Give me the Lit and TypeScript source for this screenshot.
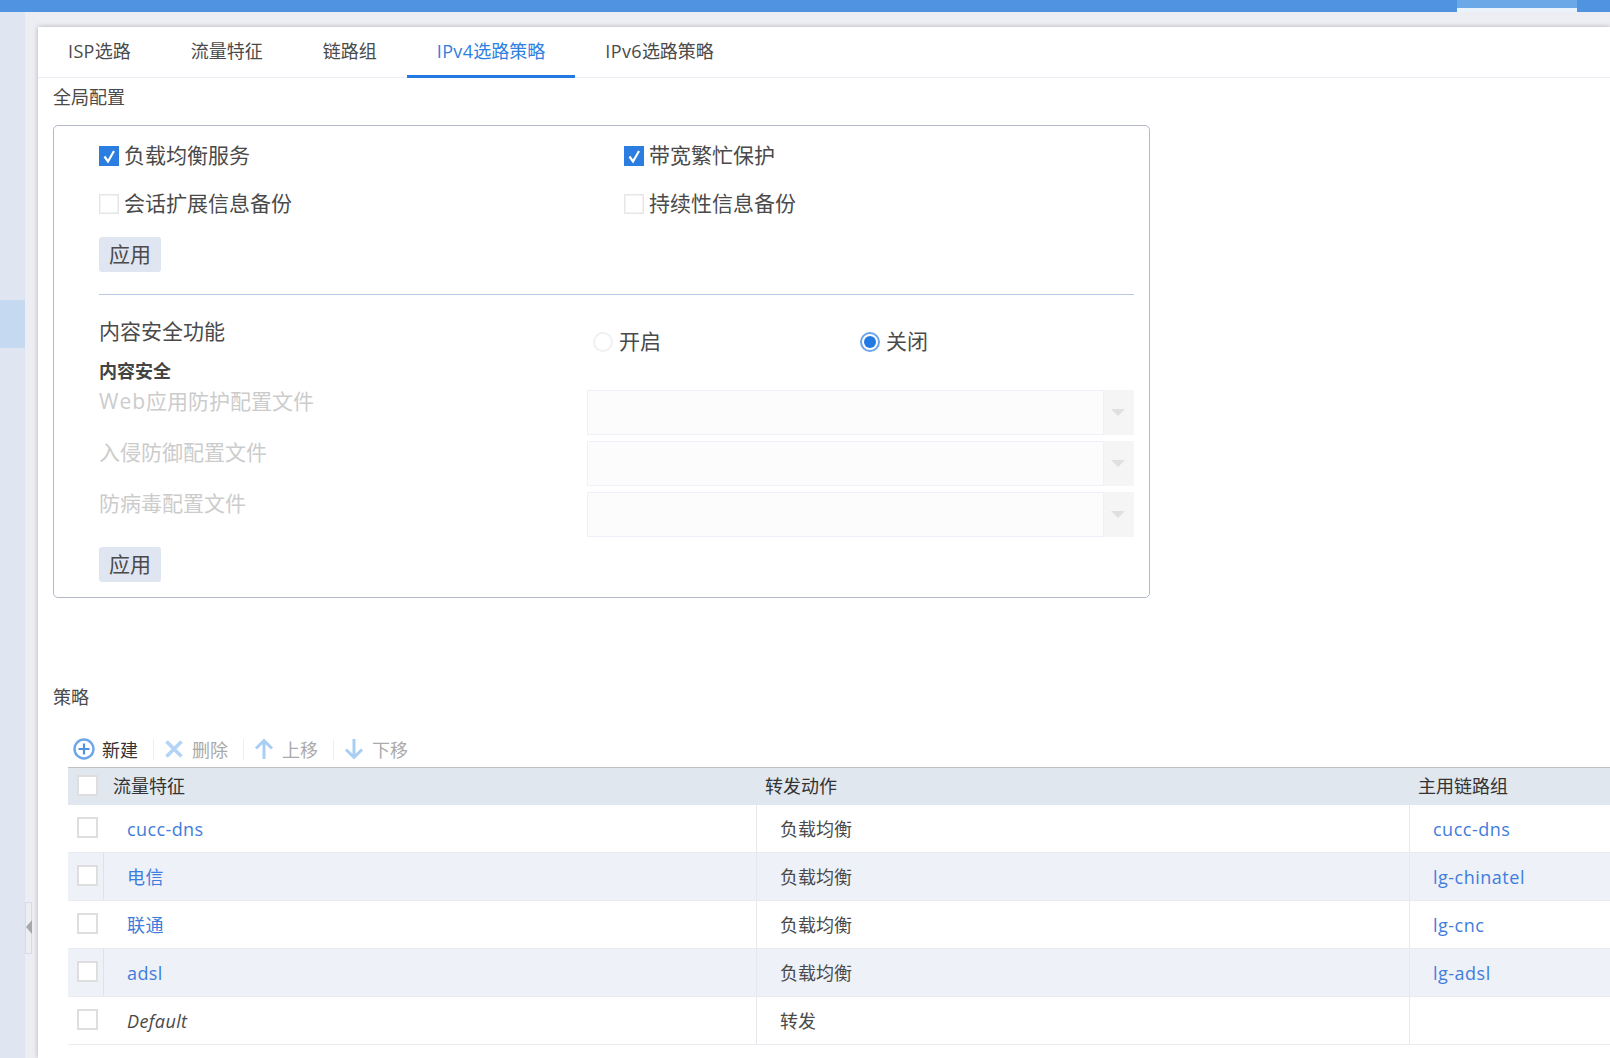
import { LitElement, html, css, svg } from "lit";
import { customElement } from "lit/decorators.js";

const rows = [
  { name: "cucc-dns", link: true, action: "负载均衡", main: "cucc-dns" },
  { name: "电信", link: true, action: "负载均衡", main: "lg-chinatel" },
  { name: "联通", link: true, action: "负载均衡", main: "lg-cnc" },
  { name: "adsl", link: true, action: "负载均衡", main: "lg-adsl" },
  { name: "Default", link: false, action: "转发", main: "" },
];

const tabs = [
  ["ISP", "选路"],
  ["", "流量特征"],
  ["", "链路组"],
  ["IPv4", "选路策略"],
  ["IPv6", "选路策略"],
];

@customElement("app-root")
export class AppRoot extends LitElement {
  static styles = css`
    :host {
      display: block;
      width: 1610px;
      height: 1058px;
      overflow: hidden;
      position: relative;
      background: #eceef4;
      font-family: "Open Sans", "Noto Sans CJK SC", sans-serif;
      font-size: 18px;
      color: #4a4a4a;
    }
    * { box-sizing: border-box; }
    .top { height: 12px; background: #5093e1; display: flex; justify-content: flex-end; padding-right: 33px; }
    .top-tab { width: 120px; height: 12px; background: #6aa8e8; border-bottom: 4px solid #eaf3fc; }
    .body { display: flex; height: 1046px; }
    .side { width: 25px; background: #dfe5f1; padding-top: 288px; flex: none; }
    .side-on { height: 48px; background: #c5d9f1; }
    .gutter { width: 13px; flex: none; }
    .handle {
      position: absolute; left: 25px; top: 902px; width: 7px; height: 52px;
      border: 1px solid #d5dbec; background: #eceef4;
    }
    .handle::after {
      content: ""; position: absolute; left: 0; top: 17px;
      border-style: solid; border-width: 7px 6px 7px 0;
      border-color: transparent #a8a8a8 transparent transparent;
    }
    .panel {
      flex: 1; min-width: 0; margin-top: 15px; background: #fff;
      box-shadow: 0 0 5px rgba(0, 0, 0, 0.25); overflow: hidden;
    }
    .tabs { display: flex; height: 51px; border-bottom: 1px solid #eceaf2; }
    .tab { padding: 0 30px; height: 51px; line-height: 49px; white-space: nowrap; }
    .tab.on { color: #2f80e0; border-bottom: 3px solid #2279e2; }
    .lat { letter-spacing: 0.35px; }
    .title { margin-left: 15px; height: 47px; padding-top: 6px; line-height: 26px; }
    .box {
      margin-left: 15px; width: 1097px; height: 473px;
      border: 1px solid #b4b9c9; border-radius: 5px; padding: 6px 15px 14px 45px;
    }
    .big { font-size: 21px; line-height: 28px; white-space: nowrap; }
    .checks { display: grid; grid-template-columns: 525px 1fr; grid-auto-rows: 48px; width: 1035px; }
    .check { display: flex; align-items: center; gap: 5px; }
    .lbl { margin-bottom: 2px; }
    .cb { width: 20px; height: 20px; border: 1px solid #e6e6e6; background: #fff; box-shadow: inset 0 0 0 1px #f2f2f2; flex: none; }
    .cb.on { background: #2b7de0; border-color: #2b7de0; box-shadow: none; display: flex; align-items: center; justify-content: center; }
    .btn {
      display: block; width: 62px; height: 35px; border: 0; padding: 0; border-radius: 3px;
      background: #dfe5f1; color: #4a4a4a; font: inherit; font-size: 21px; line-height: 35px; text-align: center;
    }
    .btn.first { margin-top: 9px; }
    .sep { height: 1px; background: #b9cbe4; margin-top: 22px; width: 1035px; }
    .feature { display: flex; height: 65px; width: 1035px; }
    .feature-name { width: 494px; padding-top: 22px; }
    .radio-wrap { width: 267px; display: flex; align-items: center; gap: 6px; height: 20px; margin-top: 37px; }
    .radio-text { margin-bottom: 2px; }
    .radio { width: 20px; height: 20px; border-radius: 50%; border: 2px solid #f0f0f2; background: #fff; flex: none; }
    .radio.on { border: 2px solid #6aa5ea; padding: 2px; display: flex; }
    .radio.on::after { content: ""; flex: 1; border-radius: 50%; background: #2279e2; }
    .sub { font-weight: 700; font-size: 18px; height: 30px; line-height: 22px; color: #444; }
    .form-row { display: flex; height: 45px; margin-bottom: 6px; width: 1035px; }
    .form-label { width: 488px; color: #ccc; line-height: 22px; }
    .web { letter-spacing: 1px; }
    .select { flex: 1; display: flex; height: 45px; }
    .select-input { flex: 1; background: #fcfcfd; border: 1px solid #eff1f8; }
    .select-btn { width: 30px; background: #f5f5f6; display: flex; align-items: center; justify-content: center; padding-right: 2px; }
    .select-btn::after {
      content: ""; border-style: solid; border-width: 7px 7px 0 7px;
      border-color: #e0e0e0 transparent transparent transparent;
    }
    .btn.second { margin-top: 10px; }
    .title.policy { margin-top: 83px; height: 30px; padding-top: 0; line-height: 32px; }
    .toolbar { margin-left: 30px; padding-left: 5px; margin-top: 22px; margin-bottom: 2px; height: 32px; display: flex; align-items: center; }
    .tool { display: flex; align-items: center; gap: 7px; color: #aaa; white-space: nowrap; }
    .tool.on { color: #333; }
    .tool svg { display: block; flex: none; }
    .tool-sep { width: 1px; height: 21px; background: #eceef2; margin: 0 9px 0 15px; }
    .table { margin-left: 30px; width: 1572px; }
    .tr { display: grid; grid-template-columns: 36px 652px 653px 1fr; height: 48px; border-bottom: 1px solid #e9ebf0; }
    .tr.even { background: #eef1f8; }
    .th { display: grid; grid-template-columns: 36px 652px 653px 1fr; height: 38px; background: #e1e7ef; border-top: 1px solid #c0c0c0; color: #333; line-height: 36px; }
    .c-check { padding: 7px 0 0 9px; }
    .th-text { padding-left: 9px; }
    .c-check.row { padding-top: 12px; }
    .tr.even .c-check { border-right: 1px solid #dfe2e8; }
    .td { height: 47px; padding: 2px 0 0 23px; line-height: 45px; white-space: nowrap; }
    .td.col { border-left: 1px solid #e6e8ee; }
    .td.main { letter-spacing: 0.5px; }
    .td.name { letter-spacing: 0.4px; }
    .cb.tb { display: block; width: 21px; height: 21px; border: 2px solid #dedede; box-shadow: none; }
    .link { color: #3f7ddc; }
    .def { font-style: italic; letter-spacing: 0.7px; }
  `;

  private chk() {
    return html`<span class="cb on"><svg width="16" height="16" viewBox="0 0 16 16"><path d="M3.5 8.5 L7 13.5 L13 3" fill="none" stroke="#fff" stroke-width="2.2"/></svg></span>`;
  }

  private icon(kind: string) {
    const paths: Record<string, unknown> = {
      plus: svg`<circle cx="11" cy="11" r="9.5" fill="none" stroke="#6ea7e8" stroke-width="2.4"/><path d="M11 5.5V16.5M5.5 11H16.5" stroke="#4f92e2" stroke-width="2.2"/>`,
      del: svg`<path d="M3.5 3.5L18.5 18.5M18.5 3.5L3.5 18.5" stroke="#b3d4f5" stroke-width="3.6"/>`,
      up: svg`<path d="M11 21V3M3 10.5L11 2.5L19 10.5" fill="none" stroke="#a9cdf3" stroke-width="3"/>`,
      down: svg`<path d="M11 1V19M3 11.5L11 19.5L19 11.5" fill="none" stroke="#a9cdf3" stroke-width="3"/>`,
    };
    return html`<svg width="22" height="22" viewBox="0 0 22 22">${paths[kind]}</svg>`;
  }

  render() {
    return html`
      <div class="top"><div class="top-tab"></div></div>
      <div class="body">
        <div class="side"><div class="side-on"></div></div>
        <div class="gutter"></div>
        <div class="panel">
          <div class="tabs">
            ${tabs.map(
              (t, i) => html`<div class="tab ${i === 3 ? "on" : ""}"><span class="lat">${t[0]}</span>${t[1]}</div>`
            )}
          </div>
          <div class="title">全局配置</div>
          <div class="box big">
            <div class="checks">
              <label class="check">${this.chk()}<span class="lbl">负载均衡服务</span></label>
              <label class="check">${this.chk()}<span class="lbl">带宽繁忙保护</span></label>
              <label class="check"><span class="cb"></span><span class="lbl">会话扩展信息备份</span></label>
              <label class="check"><span class="cb"></span><span class="lbl">持续性信息备份</span></label>
            </div>
            <button class="btn first">应用</button>
            <div class="sep"></div>
            <div class="feature">
              <div class="feature-name">内容安全功能</div>
              <div class="radio-wrap"><span class="radio"></span><span class="radio-text">开启</span></div>
              <div class="radio-wrap"><span class="radio on"></span><span class="radio-text">关闭</span></div>
            </div>
            <div class="sub">内容安全</div>
            ${[["Web", "应用防护配置文件"], ["", "入侵防御配置文件"], ["", "防病毒配置文件"]].map(
              (l) => html`<div class="form-row">
                <div class="form-label"><span class="web">${l[0]}</span>${l[1]}</div>
                <div class="select"><div class="select-input"></div><div class="select-btn"></div></div>
              </div>`
            )}
            <button class="btn second">应用</button>
          </div>
          <div class="title policy">策略</div>
          <div class="toolbar">
            <div class="tool on">${this.icon("plus")}新建</div>
            <div class="tool-sep"></div>
            <div class="tool">${this.icon("del")}删除</div>
            <div class="tool-sep"></div>
            <div class="tool">${this.icon("up")}上移</div>
            <div class="tool-sep"></div>
            <div class="tool">${this.icon("down")}下移</div>
          </div>
          <div class="table">
            <div class="th">
              <div class="c-check"><span class="cb tb"></span></div>
              <div class="th-text">流量特征</div>
              <div class="th-text">转发动作</div>
              <div class="th-text">主用链路组</div>
            </div>
            ${rows.map(
              (r, i) => html`<div class="tr ${i % 2 ? "even" : ""}">
                <div class="c-check row"><span class="cb tb"></span></div>
                <div class="td name ${r.link ? "link" : "def"}">${r.name}</div>
                <div class="td col">${r.action}</div>
                <div class="td col link main">${r.main}</div>
              </div>`
            )}
          </div>
        </div>
      </div>
      <div class="handle"></div>
    `;
  }
}
